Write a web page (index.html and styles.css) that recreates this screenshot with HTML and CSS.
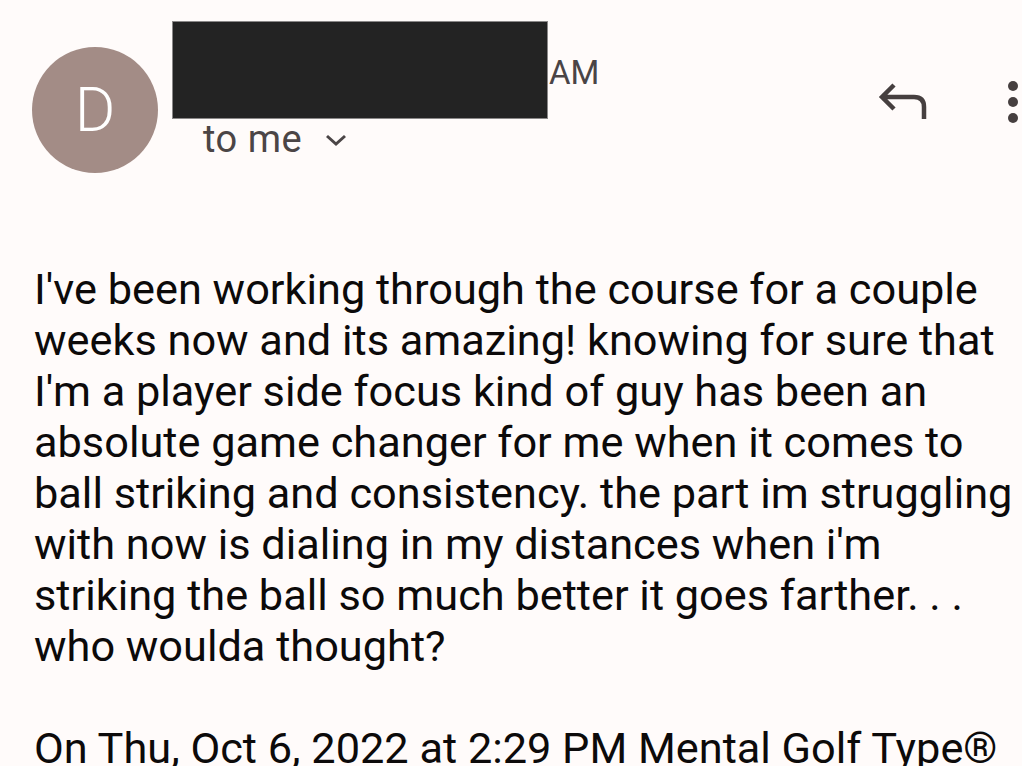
FILE: index.html
```html
<!DOCTYPE html>
<html lang="en">
<head>
<meta charset="utf-8">
<link rel="stylesheet" href="styles.css">
</head>
<body>
<div class="page">
  <header class="head">
    <div class="avatar">D</div>
    <div class="meta">
      <div class="name-row">
        <div class="redact"></div>
        <span class="time">AM</span>
      </div>
      <div class="to-row">
        <span class="to">to me</span>
        <svg class="chev" width="22" height="14" viewBox="0 0 22 14"><path d="M2 3 L11 11 L20 3" fill="none" stroke="#4b4546" stroke-width="3"/></svg>
      </div>
    </div>
    <div class="actions">
      <svg class="reply" width="50" height="40" viewBox="0 0 50 40"><path d="M16 3 L4 15 L16 27 M4 15 H36 Q46 15 46 25 V37" fill="none" stroke="#463f3f" stroke-width="4.5" stroke-linejoin="miter"/></svg>
      <div class="more"><span></span><span></span><span></span></div>
    </div>
  </header>
  <div class="body">
    <p class="msg">I've been working through the course for a couple<br>weeks now and its amazing! knowing for sure that<br>I'm a player side focus kind of guy has been an<br>absolute game changer for me when it comes to<br>ball striking and consistency. the part im struggling<br>with now is dialing in my distances when i'm<br>striking the ball so much better it goes farther. . .<br>who woulda thought?</p>
    <p class="quote">On Thu, Oct 6, 2022 at 2:29 PM Mental Golf Type®</p>
  </div>
</div>
</body>
</html>
```

FILE: styles.css
```css
html, body {
  margin: 0;
  padding: 0;
  background: #fffbfa;
}
.page {
  width: 1022px;
  height: 766px;
  overflow: hidden;
  font-family: Roboto, "Liberation Sans", sans-serif;
}
.head {
  display: flex;
  align-items: flex-start;
  padding-top: 21px;
}
.avatar {
  width: 126px;
  height: 126px;
  border-radius: 50%;
  background: #a38c86;
  color: #fff;
  font-size: 62px;
  font-weight: 300;
  line-height: 126px;
  text-align: center;
  margin: 26px 0 0 32px;
  flex: none;
}
.meta {
  margin-left: 14px;
  display: flex;
  flex-direction: column;
}
.name-row {
  display: flex;
  align-items: flex-start;
}
.redact {
  box-sizing: border-box;
  width: 376px;
  height: 98px;
  background: #232323;
  border: 1px solid #8a8888;
}
.time {
  font-size: 33px;
  color: #4a4446;
  line-height: 1;
  margin-top: 35px;
  margin-left: 1px;
}
.to-row {
  display: flex;
  align-items: center;
  margin-left: 31px;
}
.to {
  font-size: 38px;
  color: #4b4546;
  line-height: 40px;
  letter-spacing: 0.5px;
}
.chev {
  margin-left: 23px;
  margin-top: 2px;
}
.actions {
  margin-left: auto;
  display: flex;
  align-items: flex-start;
  margin-top: 60px;
}
.reply {
  margin-top: 1px;
}
.more {
  display: flex;
  flex-direction: column;
  gap: 6px;
  margin-left: 80px;
  margin-right: 4px;
}
.more span {
  width: 10px;
  height: 10px;
  border-radius: 50%;
  background: #463f3f;
}
.body {
  padding-left: 34px;
  margin-top: 91px;
}
.msg, .quote {
  margin: 0;
  font-size: 43.3px;
  line-height: 51px;
  color: #0c0a0a;
  white-space: nowrap;
}
.quote {
  margin-top: 51px;
}
```
